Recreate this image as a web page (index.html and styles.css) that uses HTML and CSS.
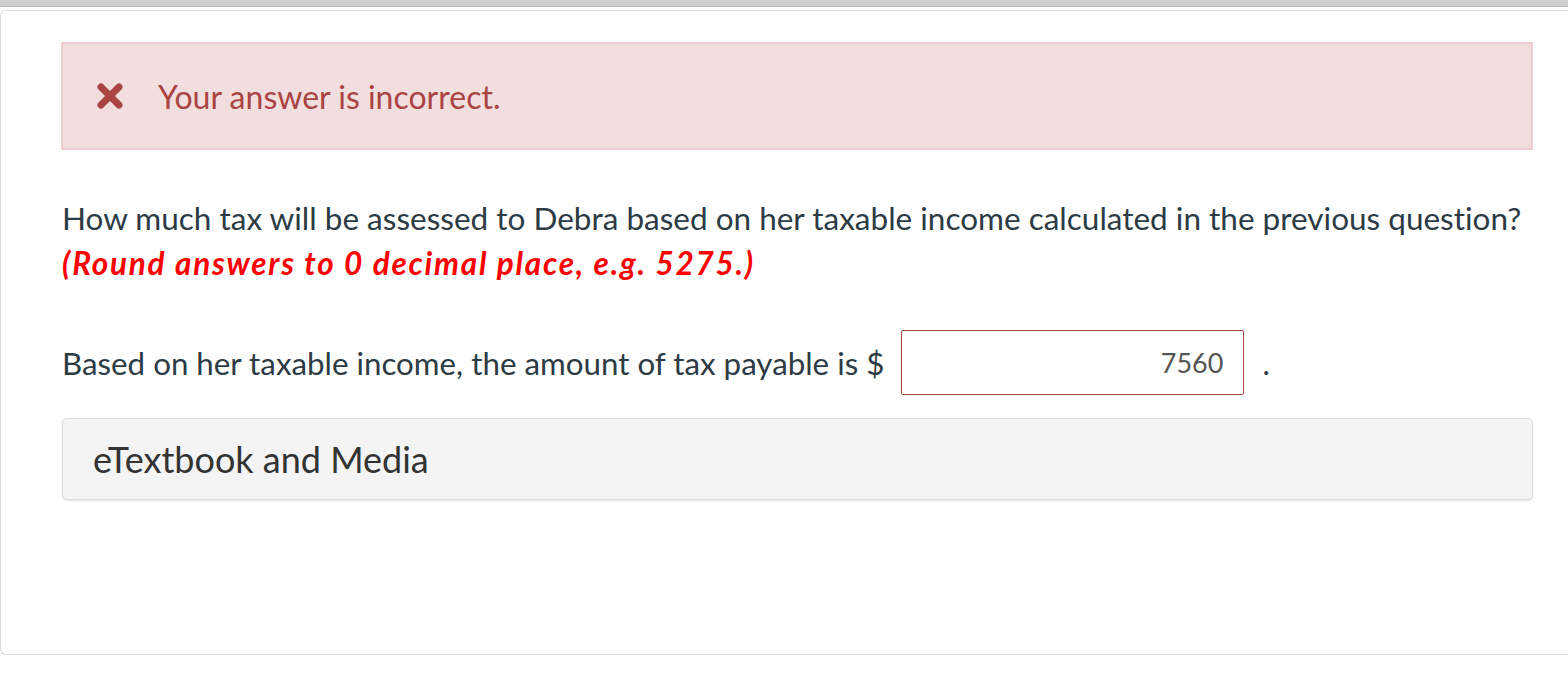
FILE: index.html
```html
<!DOCTYPE html>
<html lang="en">
<head>
<meta charset="utf-8">
<title>Question</title>
<link rel="stylesheet" href="styles.css">
</head>
<body>
<div class="topbar"></div>
<div class="card">
  <div class="alert">
    <svg class="alert-icon" viewBox="0 0 28 28" width="28" height="28" aria-hidden="true">
      <path d="M5 5 L23 23 M23 5 L5 23" stroke="#a94442" stroke-width="7" stroke-linecap="round" fill="none"/>
    </svg>
    <span class="alert-text">Your answer is incorrect.</span>
  </div>
  <p class="question">How much tax will be assessed to Debra based on her taxable income calculated in the previous question?<br><em class="hint">(Round answers to 0 decimal place, e.g. 5275.)</em></p>
  <div class="answer-row">
    <span>Based on her taxable income, the amount of tax payable is $</span>
    <span class="answer-input">7560</span>
    <span class="dot">.</span>
  </div>
  <div class="media">eTextbook and Media</div>
</div>
</body>
</html>
```
FILE: styles.css
```css
html, body {
  margin: 0;
  padding: 0;
  background: #fff;
}
body {
  font-family: Lato, "Open Sans", sans-serif;
  color: #2d3b45;
  overflow: hidden;
  font-variant-ligatures: none;
}
.topbar {
  height: 6px;
  background: #cfcfcf;
  border-bottom: 1px solid #b8b8b8;
  margin-bottom: 3px;
}
.card {
  border: 1px solid #dcdcdc;
  border-right: none;
  border-top-left-radius: 6px;
  border-bottom-left-radius: 6px;
  height: 645px;
  box-sizing: border-box;
  padding: 31px 35px 0 60px;
}
.alert {
  display: flex;
  align-items: center;
  gap: 34px;
  height: 108px;
  box-sizing: border-box;
  padding-left: 33px;
  background: #f2dede;
  border: 2px solid #ebccd1;
}
.alert-icon {
  display: block;
}
.alert-text {
  color: #a94442;
  font-size: 32px;
}
.question {
  margin: 46px 0 0 1px;
  font-size: 31.5px;
  line-height: 45px;
}
.hint {
  color: #ff0000;
  font-weight: bold;
  letter-spacing: 1.75px;
}
.answer-row {
  display: flex;
  align-items: center;
  margin: 44px 0 0 1px;
  font-size: 31.3px;
}
.answer-input {
  width: 343px;
  height: 65px;
  box-sizing: border-box;
  margin-left: 17px;
  border: 1px solid #a94442;
  border-radius: 2px;
  color: #555;
  font-size: 27px;
  display: flex;
  align-items: center;
  justify-content: flex-end;
  padding-right: 20px;
}
.dot {
  margin-left: 18px;
}
.media {
  margin: 23px 0 0 1px;
  height: 82px;
  box-sizing: border-box;
  display: flex;
  align-items: center;
  padding-left: 30px;
  background: #f4f4f4;
  border: 1px solid #dddddd;
  border-radius: 5px;
  box-shadow: 0 1px 2px rgba(0,0,0,0.12);
  color: #333;
  font-size: 36px;
}
```
